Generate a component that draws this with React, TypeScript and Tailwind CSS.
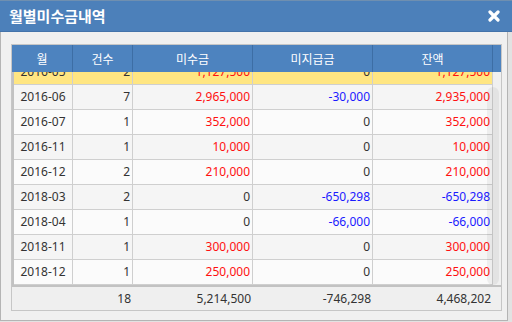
import React from "react";

type Row = { month: string; count: number; receivable: number; payable: number; balance: number };

const rows: Row[] = [
  { month: "2016-05", count: 2, receivable: 1127500, payable: 0, balance: 1127500 },
  { month: "2016-06", count: 7, receivable: 2965000, payable: -30000, balance: 2935000 },
  { month: "2016-07", count: 1, receivable: 352000, payable: 0, balance: 352000 },
  { month: "2016-11", count: 1, receivable: 10000, payable: 0, balance: 10000 },
  { month: "2016-12", count: 2, receivable: 210000, payable: 0, balance: 210000 },
  { month: "2018-03", count: 2, receivable: 0, payable: -650298, balance: -650298 },
  { month: "2018-04", count: 1, receivable: 0, payable: -66000, balance: -66000 },
  { month: "2018-11", count: 1, receivable: 300000, payable: 0, balance: 300000 },
  { month: "2018-12", count: 1, receivable: 250000, payable: 0, balance: 250000 },
];

const fmt = (n: number) => n.toLocaleString("en-US");

function tone(n: number) {
  if (n > 0) return "text-[#ff1010]";
  if (n < 0) return "text-[#1a1aff]";
  return "text-[#333333]";
}

function CloseIcon() {
  return (
    <svg width="12" height="12" viewBox="0 0 12 12">
      <path d="M2 2 L10 10 M10 2 L2 10" stroke="white" strokeWidth="3.2" strokeLinecap="round" />
    </svg>
  );
}

export default function App() {
  return (
    <div className="flex flex-col w-[512px] h-[322px] bg-[#e2e2e2] font-['Noto_Sans','Noto_Sans_CJK_KR',sans-serif] text-[12px] text-[#333333]">
      <header className="flex items-center justify-between h-[32px] bg-[#4c80ba] border-t border-[#6f8fb0] border-b border-b-[#4373aa] pl-[9px] pr-[12px]">
        <span className="font-['Noto_Sans_CJK_KR',sans-serif] font-bold text-[15px] text-white">월별미수금내역</span>
        <CloseIcon />
      </header>

      <div className="flex w-[508px] h-[289px] bg-[#f0f0f0] border-l border-r border-b border-[#b4b4b4] pt-[12px] pl-[10px]">
        <div className="flex flex-col w-[491px] h-[267px] border border-[#c6c6c6]">
          <div className="flex h-[27px] bg-[#4d83bf] text-white font-['Noto_Sans_CJK_KR',sans-serif] text-[12px]">
            <div className="flex items-center justify-center w-[61px] border-r border-[#3d6ea5]">월</div>
            <div className="flex items-center justify-center w-[60px] border-r border-[#3d6ea5]">건수</div>
            <div className="flex items-center justify-center w-[120px] border-r border-[#3d6ea5]">미수금</div>
            <div className="flex items-center justify-center w-[120px] border-r border-[#3d6ea5]">미지급금</div>
            <div className="flex items-center justify-center w-[120px] border-r border-[#3d6ea5]">잔액</div>
            <div className="w-[8px]" />
          </div>

          <div className="relative flex h-[215px] overflow-hidden border-l-2 border-b-2 border-[#c2c2c2] bg-[#f0f0f0]">
            <div className="flex flex-col w-[479px] -mt-[12px]">
              {rows.map((r, i) => (
                <div
                  key={r.month}
                  className={`flex h-[25px] border-b border-[#cfcfcf] ${
                    i === 0 ? "bg-[#ffe682]" : i % 2 === 1 ? "bg-[#f5f5f5]" : "bg-[#fbfbfb]"
                  }`}
                >
                  <div className="flex items-center justify-center w-[59px] border-r border-[#cfcfcf]">{r.month}</div>
                  <div className="flex items-center justify-end w-[60px] pr-[2px] border-r border-[#cfcfcf]">{r.count}</div>
                  <div className={`flex items-center justify-end w-[120px] pr-[2px] border-r border-[#cfcfcf] ${tone(r.receivable)}`}>
                    {fmt(r.receivable)}
                  </div>
                  <div className={`flex items-center justify-end w-[120px] pr-[2px] border-r border-[#cfcfcf] ${tone(r.payable)}`}>
                    {fmt(r.payable)}
                  </div>
                  <div className={`flex items-center justify-end w-[120px] pr-[2px] border-r border-[#cfcfcf] ${tone(r.balance)}`}>
                    {fmt(r.balance)}
                  </div>
                </div>
              ))}
            </div>
            <div className="absolute top-[15px] left-[473px] w-[12px] h-[198px] rounded-[6px] bg-black/[0.05]" />
          </div>

          <div className="flex h-[23px] bg-[#efefef] text-[#333333]">
            <div className="w-[61px]" />
            <div className="flex items-center justify-end w-[60px] pr-[2px]">18</div>
            <div className="flex items-center justify-end w-[120px] pr-[2px]">5,214,500</div>
            <div className="flex items-center justify-end w-[120px] pr-[2px]">-746,298</div>
            <div className="flex items-center justify-end w-[120px] pr-[2px]">4,468,202</div>
          </div>
        </div>
      </div>
    </div>
  );
}
